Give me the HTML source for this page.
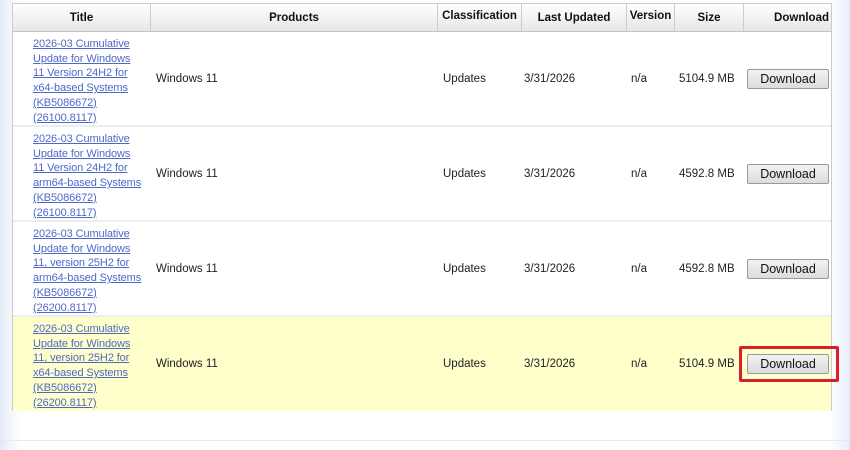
<!DOCTYPE html>
<html><head><style>
body{margin:0;width:850px;height:450px;overflow:hidden;background:linear-gradient(90deg,#e3eaf7 0,#f4f7fc 12px,#fff 20px,#fff 830px,#e6edf9 850px);font-family:"Liberation Sans",sans-serif;position:relative}
.t{position:absolute;left:12px;top:3px;width:820px;height:408px;background:#fff;border:1px solid #c8ccd2;box-sizing:border-box}
.h{position:absolute;top:0;height:28px;background:linear-gradient(#fff,#e6e6e6);border-right:1px solid #c8ccd2;border-bottom:1px solid #c0c4ca;font-weight:bold;font-size:11.5px;color:#111;text-align:center;line-height:28px;box-sizing:border-box}
.r{position:absolute;left:0;width:818px;height:95px;border-bottom:2px solid #eee;box-sizing:border-box}
.c{position:absolute;font-size:11.5px;color:#222;top:41px}
.a{position:absolute;left:20px;top:5px;white-space:nowrap;font-size:11px;letter-spacing:-0.1px;line-height:14.7px;color:#4f68c8;text-decoration:underline}
.b{position:absolute;left:734px;top:37px;width:82px;height:20px;background:linear-gradient(#f2f2f2,#dcdcdc);border:1px solid #999;border-radius:2px;font-size:12.5px;text-align:center;line-height:19px;color:#111;box-sizing:border-box}
</style></head><body>
<div class="t">
<div class="h" style="left:0;width:138px">Title</div>
<div class="h" style="left:138px;width:287px">Products</div>
<div class="h" style="left:425px;width:84px;line-height:24px">Classification</div>
<div class="h" style="left:509px;width:105px">Last Updated</div>
<div class="h" style="left:614px;width:48px;line-height:24px">Version</div>
<div class="h" style="left:662px;width:69px">Size</div>
<div class="h" style="left:731px;width:87px;border-right:0;text-align:right;padding-right:2px">Download</div>

<div class="r" style="top:28px"><div class="a">2026-03 Cumulative<br>Update for Windows<br>11 Version 24H2 for<br>x64-based Systems<br>(KB5086672)<br>(26100.8117)</div><div class="c" style="left:143px">Windows 11</div><div class="c" style="left:430px">Updates</div><div class="c" style="left:511px">3/31/2026</div><div class="c" style="left:618px">n/a</div><div class="c" style="left:666px">5104.9 MB</div><div class="b">Download</div></div>
<div class="r" style="top:123px"><div class="a">2026-03 Cumulative<br>Update for Windows<br>11 Version 24H2 for<br>arm64-based Systems<br>(KB5086672)<br>(26100.8117)</div><div class="c" style="left:143px">Windows 11</div><div class="c" style="left:430px">Updates</div><div class="c" style="left:511px">3/31/2026</div><div class="c" style="left:618px">n/a</div><div class="c" style="left:666px">4592.8 MB</div><div class="b">Download</div></div>
<div class="r" style="top:218px"><div class="a">2026-03 Cumulative<br>Update for Windows<br>11, version 25H2 for<br>arm64-based Systems<br>(KB5086672)<br>(26200.8117)</div><div class="c" style="left:143px">Windows 11</div><div class="c" style="left:430px">Updates</div><div class="c" style="left:511px">3/31/2026</div><div class="c" style="left:618px">n/a</div><div class="c" style="left:666px">4592.8 MB</div><div class="b">Download</div></div>
<div class="r" style="top:313px;height:94px;background:#ffffcc;border:0"><div class="a">2026-03 Cumulative<br>Update for Windows<br>11, version 25H2 for<br>x64-based Systems<br>(KB5086672)<br>(26200.8117)</div><div class="c" style="left:143px">Windows 11</div><div class="c" style="left:430px">Updates</div><div class="c" style="left:511px">3/31/2026</div><div class="c" style="left:618px">n/a</div><div class="c" style="left:666px">5104.9 MB</div><div class="b">Download</div></div>
</div>
<div style="position:absolute;left:739px;top:346px;width:100px;height:36px;border:3px solid #d9202a;box-sizing:border-box;border-radius:2px"></div>
<div style="position:absolute;left:0;top:440px;width:850px;height:1px;background:#e6e9ee"></div>
</body></html>
